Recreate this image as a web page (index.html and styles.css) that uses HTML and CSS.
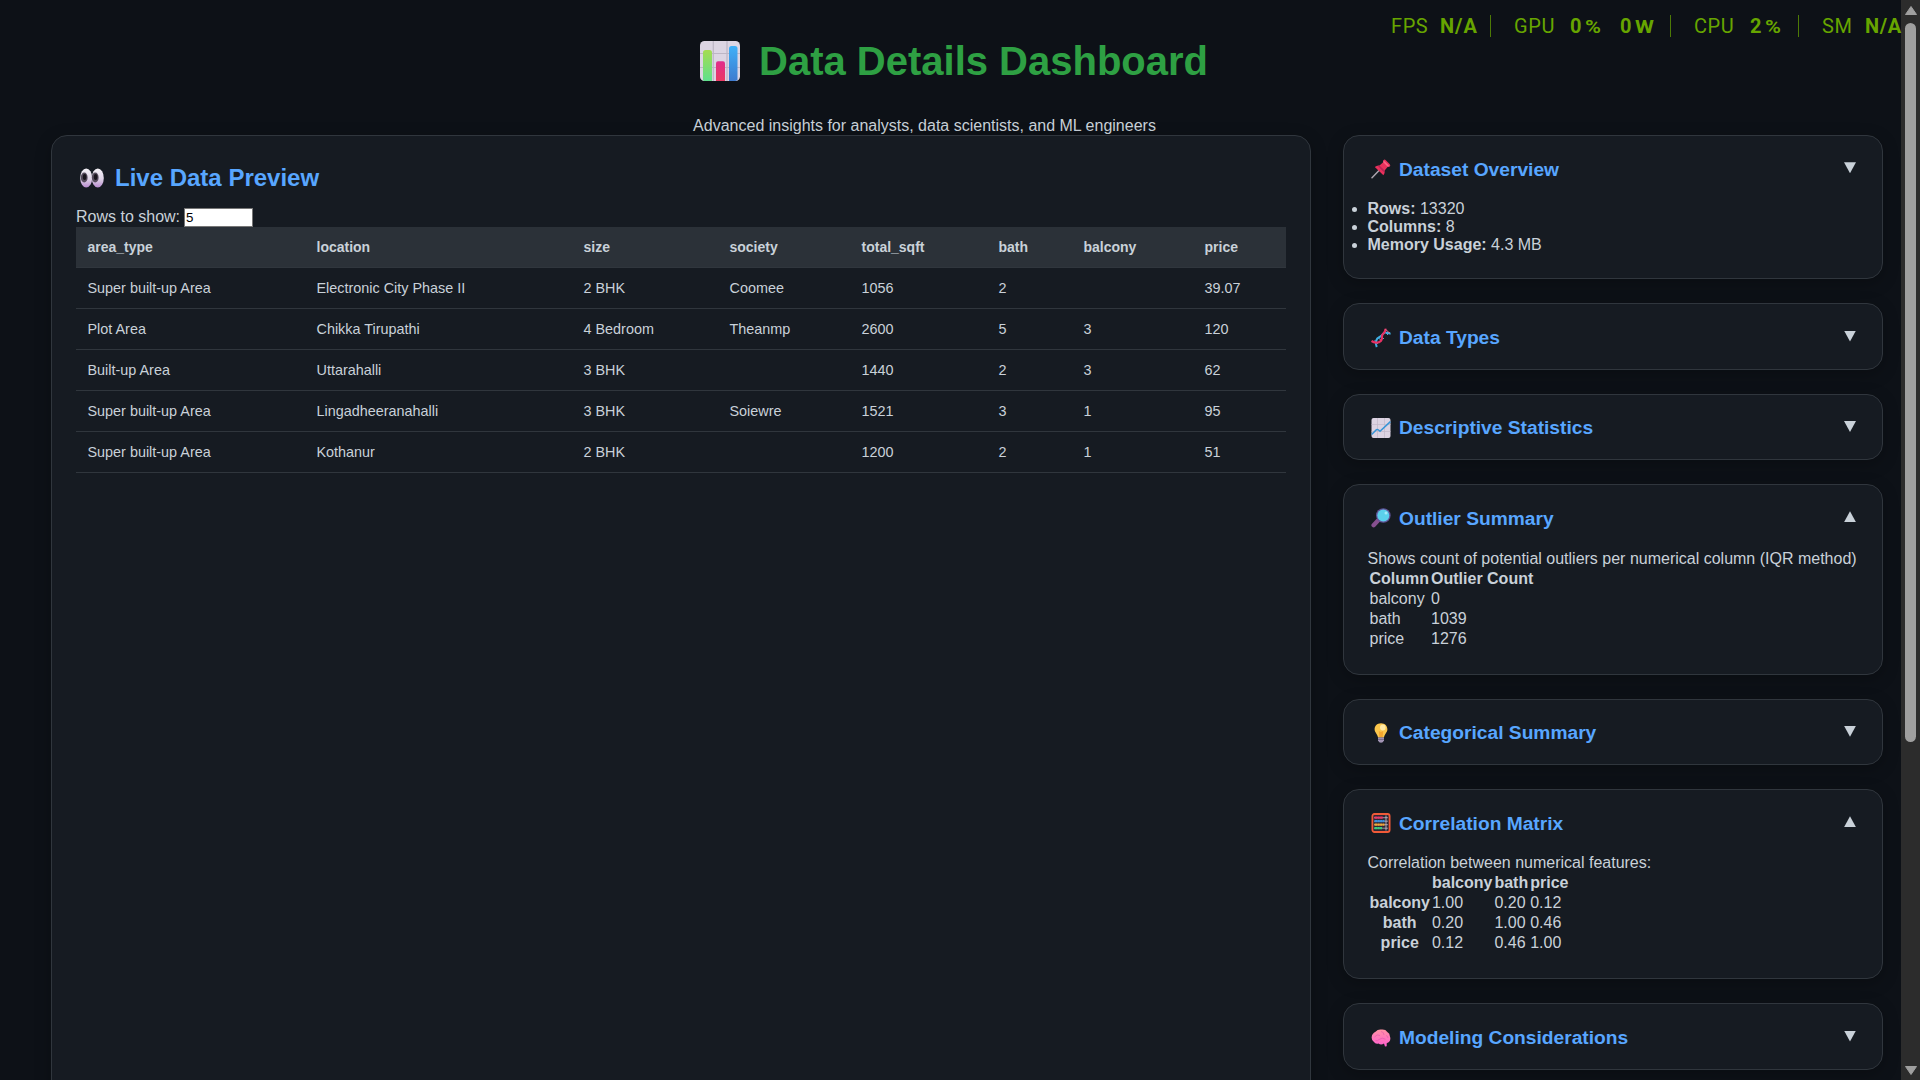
FILE: index.html
```html
<!DOCTYPE html>
<html lang="en">
<head>
<meta charset="utf-8">
<title>Data Details Dashboard</title>
<link rel="stylesheet" href="styles.css">
</head>
<body>
<div class="page">
  <header class="page-header">
    <h1>
      <svg class="icon-hero" viewBox="0 0 40 40">
        <defs>
          <linearGradient id="g1" x1="0" y1="0" x2="0" y2="1"><stop offset="0" stop-color="#a5dc50"/><stop offset="1" stop-color="#5ee08d"/></linearGradient>
          <linearGradient id="g2" x1="0" y1="0" x2="0" y2="1"><stop offset="0" stop-color="#3fb0f8"/><stop offset="1" stop-color="#3d7bcf"/></linearGradient>
          <linearGradient id="g3" x1="0" y1="0" x2="0" y2="1"><stop offset="0" stop-color="#e02d8c"/><stop offset="1" stop-color="#e93a62"/></linearGradient>
        </defs>
        <rect width="40" height="40" rx="4.5" fill="#dcd5e3"/>
        <path d="M13.3 0V40M27 0V40M0 12.5H40M0 26.5H40" stroke="#bdb6c5" stroke-width="1.2"/>
        <path d="M3 11.5Q3 9 5.500 9H9.500Q12 9 12 11.500V40H4Q3 39.500 3 38.500Z" fill="url(#g1)"/>
        <path d="M16 40V22.500Q16 20.300 18 20.300H23Q25 20.300 25 22.500V40Z" fill="url(#g3)"/>
        <path d="M29 40V7.500Q29 5 31.500 5H35Q37.500 5 37.500 7.500V39L35.500 40Z" fill="url(#g2)"/>
      </svg>
      <span>Data Details Dashboard</span>
    </h1>
    <p>Advanced insights for analysts, data scientists, and ML engineers</p>
  </header>

  <main class="columns">
    <section class="card preview">
      <h2>
        <svg class="icon-eyes" viewBox="0 0 24 20">
          <defs><linearGradient id="ey" x1="0" y1="0" x2="0" y2="1"><stop offset="0" stop-color="#f5f2f7"/><stop offset=".55" stop-color="#ded3e6"/><stop offset="1" stop-color="#b88bd0"/></linearGradient></defs>
          <ellipse cx="6.200" cy="10" rx="6" ry="9.500" fill="url(#ey)"/>
          <ellipse cx="17.800" cy="10" rx="6" ry="9.500" fill="url(#ey)"/>
          <ellipse cx="4.200" cy="9.500" rx="3.400" ry="5" fill="#554b5c"/>
          <ellipse cx="15.200" cy="9.500" rx="3.400" ry="5" fill="#554b5c"/>
          <ellipse cx="4.600" cy="9" rx="1.800" ry="3" fill="#18141c"/>
          <ellipse cx="15.600" cy="9" rx="1.800" ry="3" fill="#18141c"/>
        </svg>
        <span>Live Data Preview</span>
      </h2>
      <div class="rows-control"><label for="rows">Rows to show:</label><input id="rows" type="text" value="5"></div>
      <table class="data-table">
        <colgroup><col class="c1"><col class="c2"><col class="c3"><col class="c4"><col class="c5"><col class="c6"><col class="c7"><col class="c8"></colgroup>
        <thead><tr><th>area_type</th><th>location</th><th>size</th><th>society</th><th>total_sqft</th><th>bath</th><th>balcony</th><th>price</th></tr></thead>
        <tbody>
          <tr><td>Super built-up Area</td><td>Electronic City Phase II</td><td>2 BHK</td><td>Coomee</td><td>1056</td><td>2</td><td></td><td>39.07</td></tr>
          <tr><td>Plot Area</td><td>Chikka Tirupathi</td><td>4 Bedroom</td><td>Theanmp</td><td>2600</td><td>5</td><td>3</td><td>120</td></tr>
          <tr><td>Built-up Area</td><td>Uttarahalli</td><td>3 BHK</td><td></td><td>1440</td><td>2</td><td>3</td><td>62</td></tr>
          <tr><td>Super built-up Area</td><td>Lingadheeranahalli</td><td>3 BHK</td><td>Soiewre</td><td>1521</td><td>3</td><td>1</td><td>95</td></tr>
          <tr><td>Super built-up Area</td><td>Kothanur</td><td>2 BHK</td><td></td><td>1200</td><td>2</td><td>1</td><td>51</td></tr>
        </tbody>
      </table>
    </section>

    <aside class="sidebar">
      <section class="card">
        <div class="card-head">
          <svg class="icon" viewBox="0 0 20 20"><path d="M1 18.800L8 11.500" stroke="#a9a3ad" stroke-width="1.500" stroke-linecap="round"/><path d="M12.500 1.200Q13.500 0 14.800 1.200L18.800 5.200Q20 6.500 18.600 7.400L16.800 7.800L13.600 11.600Q14.200 14.500 12.400 16.200L3.800 8Q5.800 6 8.500 6.500L12.200 3.200Z" fill="#e8315c"/><path d="M12.500 1.200L18.700 7.300L16.800 7.800L12.200 3.200Z" fill="#ff6385"/><path d="M8.500 6.500L13.600 11.600L12.400 13L7 7Z" fill="#b92557"/></svg>
          <h3>Dataset Overview</h3><span class="toggle down"></span>
        </div>
        <ul><li><b>Rows:</b> 13320</li><li><b>Columns:</b> 8</li><li><b>Memory Usage:</b> 4.3 MB</li></ul>
      </section>

      <section class="card">
        <div class="card-head">
          <svg class="icon" viewBox="0 0 20 20" fill="none"><path d="M3.500 12.500L7 16M7 9.500L10.800 13M9.500 7.500L13 11M13.500 3.500L17 7" stroke="#6f9cc8" stroke-width="1"/><path d="M5.800 19C3.800 14.500 5 10.500 8.500 9C12 7.500 11.500 4.800 14 4.500S17.500 6 19.500 5.300" stroke="#3fb0e4" stroke-width="2"/><path d="M.500 13C3 14.800 7.500 15.500 9.800 13C12.500 10 9.500 8.500 12 6C14 4 14.800 3.500 14.300 .800" stroke="#e82f62" stroke-width="2.200"/><path d="M14.300 .800C15.500 2.500 16.500 3.500 19 5" stroke="#e86a8c" stroke-width="1"/></svg>
          <h3>Data Types</h3><span class="toggle down"></span>
        </div>
      </section>

      <section class="card">
        <div class="card-head">
          <svg class="icon" viewBox="0 0 20 20"><rect x=".500" width="19" height="20" rx="2" fill="#dcd3e2"/><path d="M6.500 0V20M13.500 0V20M.500 6.500H19.500M.500 13.500H19.500" stroke="#c1b8c8" stroke-width=".700"/><path d="M.600 16.500L5.500 11.700Q6.500 11 7.500 12L9 13.200L19.400 3.600" fill="none" stroke="#3895d6" stroke-width="1.500"/></svg>
          <h3>Descriptive Statistics</h3><span class="toggle down"></span>
        </div>
      </section>

      <section class="card">
        <div class="card-head">
          <svg class="icon" viewBox="0 0 20 20"><path d="M2.600 17.200L7 12.600" stroke="#86508f" stroke-width="4.400" stroke-linecap="round"/><circle cx="12.300" cy="7.500" r="7.300" fill="#62559a"/><circle cx="12.300" cy="7.500" r="6" fill="#5bd0ec"/><circle cx="15" cy="5" r="1.500" fill="#a2eafa"/></svg>
          <h3>Outlier Summary</h3><span class="toggle up"></span>
        </div>
        <div class="card-body">
          <p>Shows count of potential outliers per numerical column (IQR method)</p>
          <table class="mini">
            <tr><th>Column</th><th>Outlier Count</th></tr>
            <tr><td>balcony</td><td>0</td></tr>
            <tr><td>bath</td><td>1039</td></tr>
            <tr><td>price</td><td>1276</td></tr>
          </table>
        </div>
      </section>

      <section class="card">
        <div class="card-head">
          <svg class="icon" viewBox="0 0 20 20"><path d="M10 .200C5.900 .200 3.600 3 3.600 6.300C3.600 9.600 6.500 11 7 14.500H13C13.500 11 16.400 9.600 16.400 6.300C16.400 3 14.100 .200 10 .200Z" fill="#fbc64c"/><path d="M8.300 14L7.800 8L10 9L12.200 8L11.700 14Z" fill="#f5a72e"/><ellipse cx="11.800" cy="4.500" rx="2.800" ry="3" fill="#ffe9a6"/><path d="M7 14.500H13V17.500Q12 19.800 10 19.800T7 17.500Z" fill="#a294b4"/><path d="M7 16.400H13" stroke="#665b78" stroke-width=".800"/></svg>
          <h3>Categorical Summary</h3><span class="toggle down"></span>
        </div>
      </section>

      <section class="card">
        <div class="card-head">
          <svg class="icon" viewBox="0 0 20 20"><rect x="1.400" y="1" width="17.200" height="18" rx="2" fill="#2d2734" stroke="#f15a38" stroke-width="1.800"/><path d="M3 4.700H17M3 8.200H17M3 11.700H17M3 15.200H17" stroke="#b5adbd" stroke-width=".800"/><path d="M15 2.500V17.500" stroke="#d2cbd8" stroke-width=".800"/><path d="M3.500 4.700H12" stroke="#ef3568" stroke-width="2.300" stroke-dasharray="2.500 .300"/><path d="M3.500 8.200H13.500" stroke="#3a8fe0" stroke-width="2.300" stroke-dasharray="2.500 .300"/><path d="M3.500 11.700H13.500" stroke="#f8a935" stroke-width="2.300" stroke-dasharray="2.500 .300"/><path d="M3.500 15.200H11" stroke="#37cf7c" stroke-width="2.300" stroke-dasharray="2.500 .300"/></svg>
          <h3>Correlation Matrix</h3><span class="toggle up"></span>
        </div>
        <div class="card-body">
          <p>Correlation between numerical features:</p>
          <table class="mini">
            <tr><th></th><th>balcony</th><th>bath</th><th>price</th></tr>
            <tr><th>balcony</th><td>1.00</td><td>0.20</td><td>0.12</td></tr>
            <tr><th>bath</th><td>0.20</td><td>1.00</td><td>0.46</td></tr>
            <tr><th>price</th><td>0.12</td><td>0.46</td><td>1.00</td></tr>
          </table>
        </div>
      </section>

      <section class="card">
        <div class="card-head">
          <svg class="icon" viewBox="0 0 20 20"><defs><linearGradient id="br" x1="0" y1="0" x2="0" y2="1"><stop offset="0" stop-color="#ff92a4"/><stop offset="1" stop-color="#ff5fd0"/></linearGradient></defs><path d="M4.500 3.800Q7 1 10.500 1.600Q14.500 1.200 16.300 4Q19 5.500 18.900 8.500Q20.200 11.500 18 14L15.700 15.300V18.200L14 18.500L13 15.600Q10 17.500 7.500 15.500Q4.500 16.500 3 14Q.300 12.500 .700 9Q1 5.500 4.500 3.800Z" fill="url(#br)"/><path d="M3.500 9Q6 5.500 9 7.500M10 3.500Q13 4 13 7M8 11.500Q11 9 14.500 11.200M4.500 12.500Q6.500 13.500 8 11.500M15 7.500Q17 8 17 10" fill="none" stroke="#e35cae" stroke-width=".700"/></svg>
          <h3>Modeling Considerations</h3><span class="toggle down"></span>
        </div>
      </section>
    </aside>
  </main>
</div>

<div class="scrollbar">
  <svg class="arrow" viewBox="0 0 14 11"><path d="M7 1.500L12.500 9.500H1.500Z"/></svg>
  <div class="thumb"></div>
  <svg class="arrow end" viewBox="0 0 14 11"><path d="M7 9.500L12.500 1.500H1.500Z"/></svg>
</div>

<div class="perf">
  <span class="fps">FPS</span><b class="fps-v">N/A</b><i></i>
  <span class="gpu">GPU</span><b class="gpu-v">0<small>%</small></b><b class="watt">0<small>W</small></b><i></i>
  <span class="cpu">CPU</span><b class="cpu-v">2<small>%</small></b><i></i>
  <span class="sm">SM</span><b>N/A</b>
</div>
</body>
</html>
```
FILE: styles.css
```css
* { box-sizing: border-box; margin: 0; padding: 0; }
html, body { height: 1080px; overflow: hidden; }
body {
  display: flex;
  position: relative;
  background: #0d1117;
  color: #c9d1d9;
  font: 16px/18px "Liberation Sans", Arial, sans-serif;
}
.page { flex: 1; height: 1080px; overflow: hidden; }

.page-header { height: 135px; padding-top: 41px; }
h1 {
  display: flex;
  align-items: center;
  gap: 19px;
  height: 40px;
  padding-left: 700px;
  color: #2ea043;
  font-size: 40px;
  line-height: 40px;
  white-space: nowrap;
}
.icon-hero { width: 40px; height: 40px; }
.page-header p { width: 1849px; margin-top: 36px; text-align: center; }

.columns { display: grid; grid-template-columns: 1260px 540px; gap: 32px; padding-left: 51px; }
.card {
  background: #161b22;
  border: 1px solid #30363d;
  border-radius: 16px;
  padding: 24px;
  box-shadow: 0 4px 16px rgba(0, 0, 0, .25);
}
.preview { height: 1200px; }
h2 {
  display: flex;
  align-items: center;
  gap: 11px;
  height: 36px;
  padding-left: 4px;
  color: #58a6ff;
  font-size: 24px;
  line-height: 28px;
}
.icon-eyes { width: 24px; height: 20px; }
.rows-control { display: flex; align-items: flex-start; gap: 4px; height: 19px; margin-top: 12px; }
.rows-control input {
  width: 69px;
  height: 19px;
  padding: 0 1px;
  border: 1px solid #767676;
  border-radius: 0;
  background: #fff;
  color: #000;
  font: 13.333px "Liberation Sans", Arial, sans-serif;
}

.data-table { width: 1210px; table-layout: fixed; border-collapse: separate; border-spacing: 0; }
.data-table th, .data-table td { height: 41px; padding: 0 0 0 11.5px; text-align: left; border-bottom: 1px solid #30363d; white-space: nowrap; }
.data-table th { background: #2b3138; font-size: 14px; }
.data-table td { font-size: 14.4px; }
.c1 { width: 229px; } .c2 { width: 267px; } .c3 { width: 146px; } .c4 { width: 132px; }
.c5 { width: 137px; } .c6 { width: 85px; } .c7 { width: 121px; } .c8 { width: 93px; }

.sidebar { display: flex; flex-direction: column; gap: 24px; }
.sidebar .card { flex: none; }
.card-head { display: flex; align-items: center; height: 16.4px; padding-left: 3px; }
.icon { width: 20px; height: 20px; margin-top: 2px; }
h3 { flex: 1; padding: 3px 0 0 8px; color: #58a6ff; font-size: 19.2px; line-height: 22px; }
.toggle { width: 12px; height: 11px; margin: 0 2px 1px 0; background: #c9d1d9; }
.down { clip-path: polygon(0 0, 100% 0, 50% 100%); }
.up { clip-path: polygon(50% 0, 100% 100%, 0 100%); }
.sidebar ul, .card-body { margin: 24px 0 0 -0.5px; }
.card-body p { white-space: nowrap; }
.mini { border-spacing: 2px; }
.mini td, .mini th { height: 18px; }

.scrollbar { display: flex; flex-direction: column; align-items: center; width: 19px; height: 1080px; padding: 5px 0 4px; background: #2c2c2c; }
.arrow { width: 14px; height: 11px; fill: #9f9f9f; stroke: #9f9f9f; stroke-linejoin: round; }
.thumb { width: 11px; height: 719px; margin-top: 7px; border-radius: 6px; background: #9f9f9f; }
.end { margin-top: auto; }

.perf {
  position: absolute;
  left: 1391px;
  top: 14px;
  display: flex;
  align-items: center;
  height: 24px;
  color: #67a500;
  font: 20px/24px Roboto, sans-serif;
  letter-spacing: .6px;
  white-space: nowrap;
}
.perf b { font-weight: 700; }
.perf small { display: inline-block; font-size: 18px; margin-left: 3px; transform: scaleX(1.2); transform-origin: left; }
.perf i { width: 1px; height: 22px; background: #4d7a06; margin-right: 23px; }
.fps { width: 49px; } .fps-v { width: 50px; letter-spacing: 1px; }
.gpu { width: 56px; } .gpu-v { width: 50px; } .watt { width: 50px; }
.cpu { width: 56px; } .cpu-v { width: 48px; } .sm { width: 43px; }
```
